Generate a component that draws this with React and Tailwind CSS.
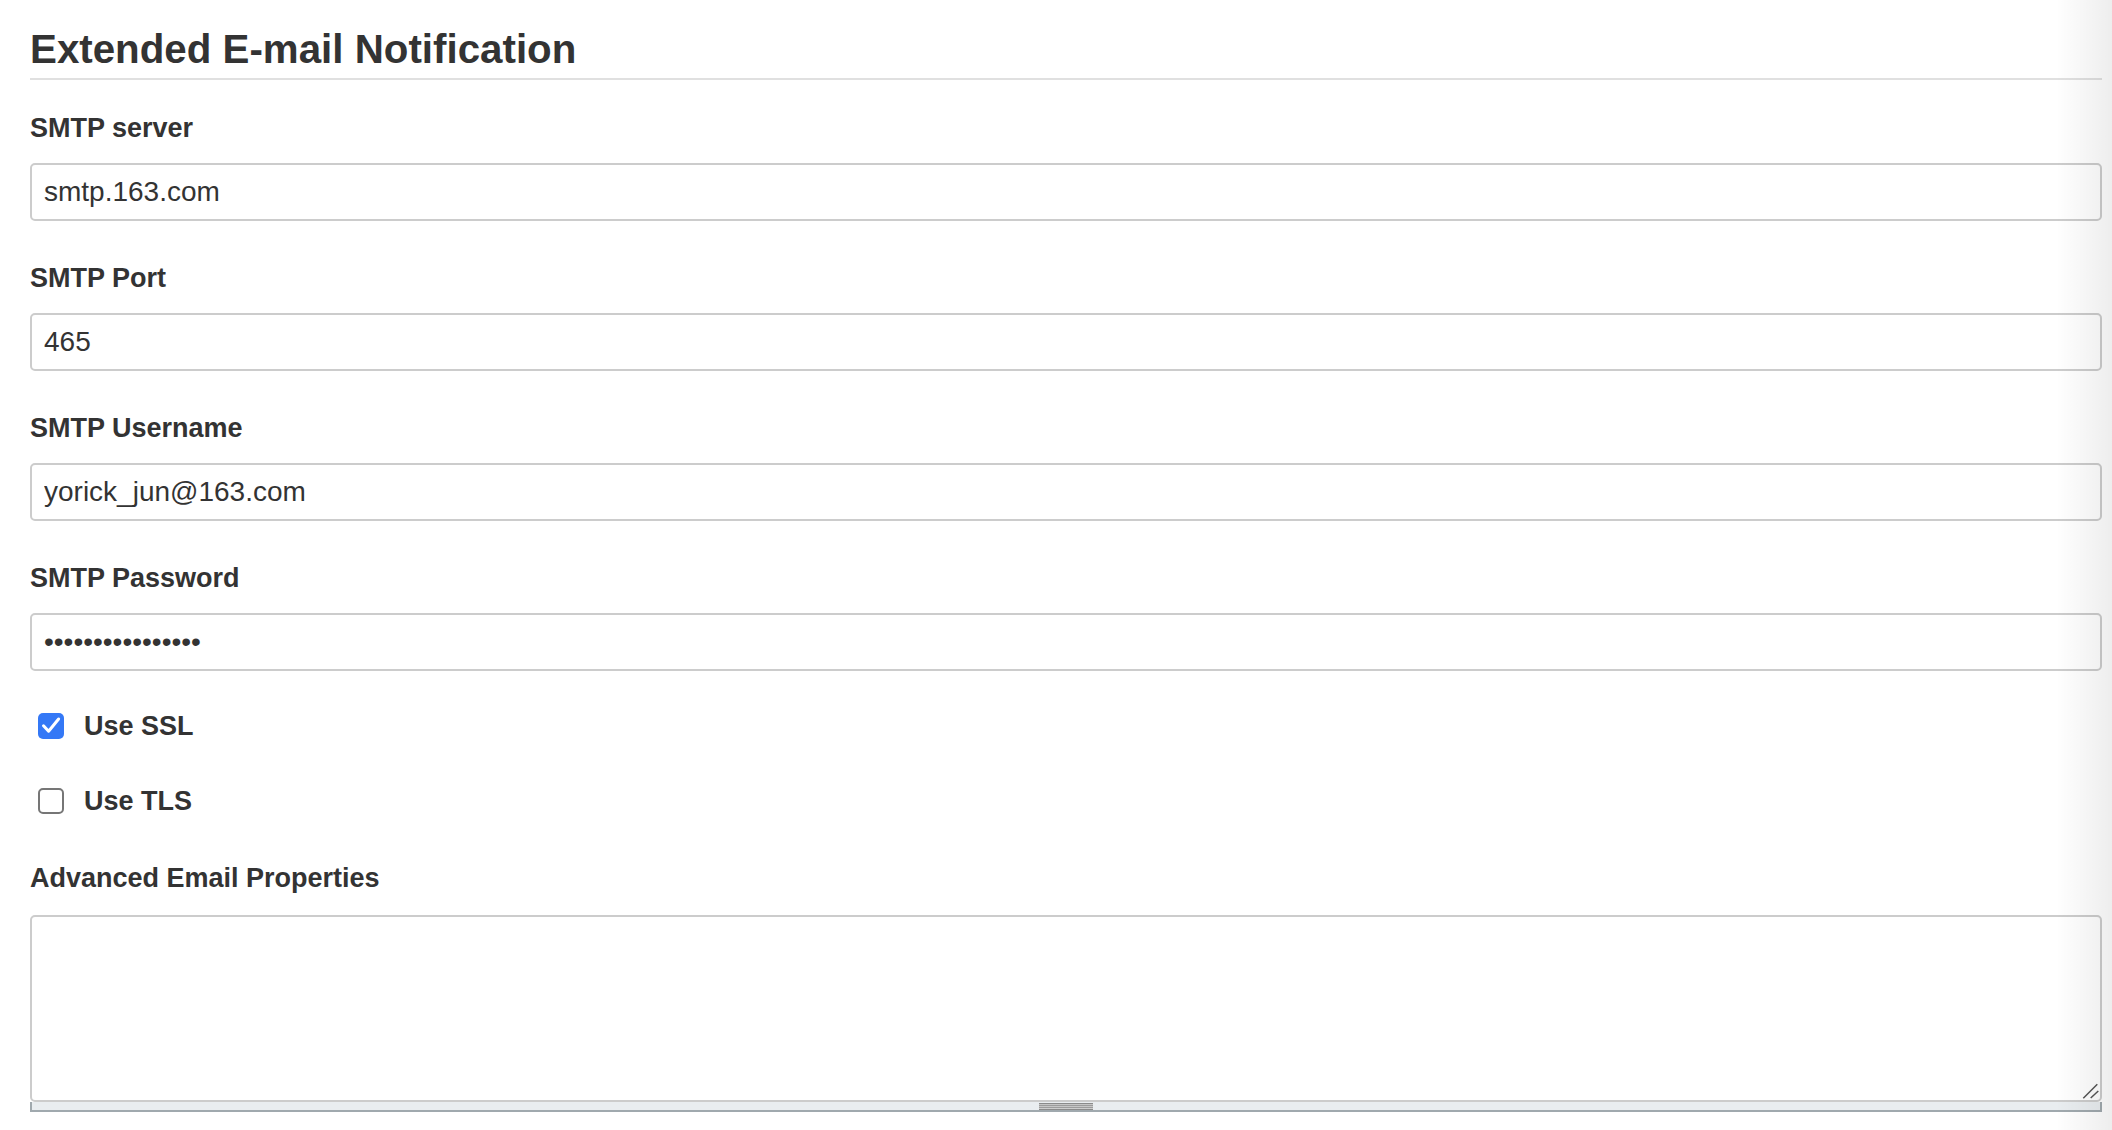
import React from 'react';

const font = "font-['Liberation_Sans',Arial,sans-serif]";

const Field = ({ label, value, type = 'text' }) => (
    <div className="mb-[41px]">
        <label className="block text-[27px] leading-[32px] font-bold text-[#333333] mb-[19px]">{label}</label>
        <input
            type={type}
            defaultValue={value}
            readOnly
            className="block w-full h-[58px] px-[12px] rounded-[5px] border-2 border-[#cccccc] bg-white text-[28px] text-[#333333] outline-none"
        />
    </div>
);

const Check = ({ label, checked }) => (
    <div className="flex items-center h-[32px] pl-[8px]">
        {checked ? (
            <span className="w-[26px] h-[26px] rounded-[5px] bg-[#3478f6] flex items-center justify-center">
                <svg viewBox="0 0 24 24" className="w-[24px] h-[24px]" fill="none" stroke="white" strokeWidth="3" strokeLinecap="round" strokeLinejoin="round">
                    <path d="M4.5 11.8 L9.6 17.2 L19.6 5" />
                </svg>
            </span>
        ) : (
            <span className="w-[26px] h-[26px] rounded-[5px] border-2 border-[#767676] bg-white" />
        )}
        <span className="ml-[20px] text-[27px] leading-[32px] font-bold text-[#333333]">{label}</span>
    </div>
);

export default function App() {
    return (
        <div className={`relative w-full h-[1130px] overflow-hidden bg-white ${font}`}>
            <div className="pl-[30px] pr-[10px] pt-[26px]">
                <h1 className="text-[40.3px] leading-[48px] font-bold text-[#333333] pb-[4px] border-b-2 border-[#e0e0e0] mb-[32px]">
                    Extended E-mail Notification
                </h1>

                <Field label="SMTP server" value="smtp.163.com" />
                <Field label="SMTP Port" value="465" />
                <Field label="SMTP Username" value="yorick_jun@163.com" />
                <div className="mb-[39px]">
                    <label className="block text-[27px] leading-[32px] font-bold text-[#333333] mb-[19px]">SMTP Password</label>
                    <input
                        type="password"
                        defaultValue="abcdefghijklmnop"
                        readOnly
                        className="block w-full h-[58px] px-[12px] rounded-[5px] border-2 border-[#cccccc] bg-white text-[28px] text-[#333333] outline-none"
                    />
                </div>

                <Check label="Use SSL" checked />
                <div className="h-[43px]" />
                <Check label="Use TLS" />

                <label className="block mt-[45px] text-[27px] leading-[32px] font-bold text-[#333333] mb-[21px]">Advanced Email Properties</label>
                <div className="relative">
                    <textarea
                        readOnly
                        className="block w-full h-[187px] rounded-[5px] border-2 border-[#cccccc] bg-white outline-none resize-none"
                    />
                    {/* resize grip in the corner */}
                    <svg viewBox="0 0 22 22" className="absolute right-0 bottom-0 w-[22px] h-[22px]" fill="none" stroke="#555555" strokeWidth="1.5">
                        <path d="M3.3 18.3 L17.3 4.3" />
                        <path d="M10.7 18 L18.3 11" />
                    </svg>
                </div>
                <div className="h-[10px] bg-[#e9edf0] border-x-2 border-b-2 border-[#a0a9ae] flex justify-center">
                    <div className="mt-[1px] w-[54px] h-[7px] flex flex-col">
                        <div className="h-[1px] bg-[#8a8a8a]" />
                        <div className="h-[1px] bg-[#c6c6c6]" />
                        <div className="h-[1px] bg-[#9c9c9c]" />
                        <div className="h-[1px] bg-[#c6c6c6]" />
                        <div className="h-[1px] bg-[#9c9c9c]" />
                        <div className="h-[1px] bg-[#cdcdcd]" />
                        <div className="h-[1px] bg-[#8a8a8a]" />
                    </div>
                </div>
            </div>
            <div className="pointer-events-none absolute top-0 right-0 h-full w-[56px] bg-gradient-to-r from-black/0 to-black/[0.07]" />
        </div>
    );
}
